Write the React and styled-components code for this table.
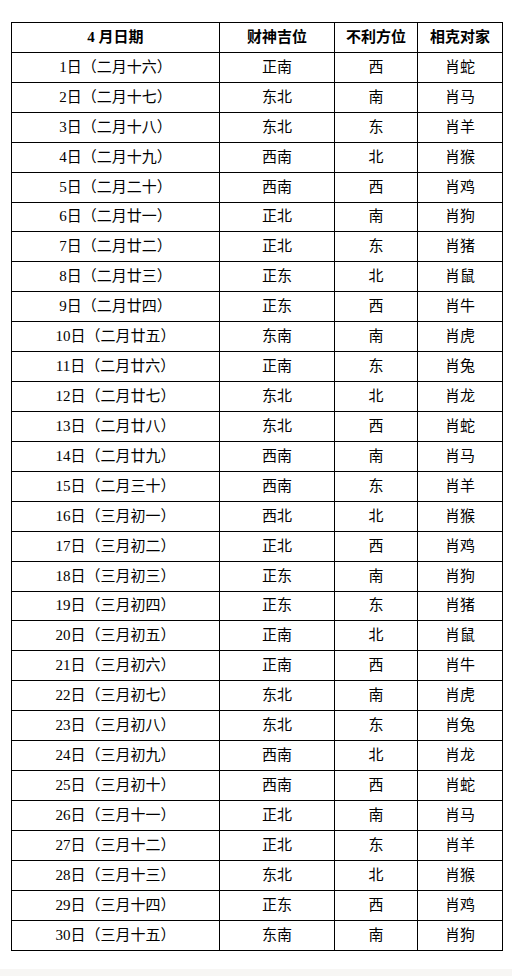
import React from 'react';
import styled, { createGlobalStyle } from 'styled-components';

const GlobalStyle = createGlobalStyle`
  *, *::before, *::after {
    box-sizing: border-box;
  }
  html, body {
    margin: 0;
    padding: 0;
    background: #fff;
  }
  body {
    font-family: "Liberation Serif", "Noto Sans CJK SC", serif;
    color: #000;
  }
`;

const Page = styled.div`
  width: 512px;
  height: 976px;
  display: flex;
  flex-direction: column;
  padding-top: 22px;
  overflow: hidden;
`;

const Table = styled.table`
  margin-left: 11px;
  width: 491px;
  border-collapse: collapse;
  table-layout: fixed;
`;

const Cell = styled.td`
  height: 29.93px;
  padding: 0;
  border: 1px solid #000;
  text-align: center;
  vertical-align: middle;
  font-size: 15px;
  line-height: 1;
  font-weight: ${(props) => (props.$head ? 700 : 400)};
`;

const Footer = styled.div`
  margin-top: auto;
  height: 7px;
  flex-shrink: 0;
  background: #f7f6f4;
`;

const rows = [
  ['二月十六', '正南', '西', '肖蛇'],
  ['二月十七', '东北', '南', '肖马'],
  ['二月十八', '东北', '东', '肖羊'],
  ['二月十九', '西南', '北', '肖猴'],
  ['二月二十', '西南', '西', '肖鸡'],
  ['二月廿一', '正北', '南', '肖狗'],
  ['二月廿二', '正北', '东', '肖猪'],
  ['二月廿三', '正东', '北', '肖鼠'],
  ['二月廿四', '正东', '西', '肖牛'],
  ['二月廿五', '东南', '南', '肖虎'],
  ['二月廿六', '正南', '东', '肖兔'],
  ['二月廿七', '东北', '北', '肖龙'],
  ['二月廿八', '东北', '西', '肖蛇'],
  ['二月廿九', '西南', '南', '肖马'],
  ['二月三十', '西南', '东', '肖羊'],
  ['三月初一', '西北', '北', '肖猴'],
  ['三月初二', '正北', '西', '肖鸡'],
  ['三月初三', '正东', '南', '肖狗'],
  ['三月初四', '正东', '东', '肖猪'],
  ['三月初五', '正南', '北', '肖鼠'],
  ['三月初六', '正南', '西', '肖牛'],
  ['三月初七', '东北', '南', '肖虎'],
  ['三月初八', '东北', '东', '肖兔'],
  ['三月初九', '西南', '北', '肖龙'],
  ['三月初十', '西南', '西', '肖蛇'],
  ['三月十一', '正北', '南', '肖马'],
  ['三月十二', '正北', '东', '肖羊'],
  ['三月十三', '东北', '北', '肖猴'],
  ['三月十四', '正东', '西', '肖鸡'],
  ['三月十五', '东南', '南', '肖狗'],
];

const App = () => (
  <Page>
    <GlobalStyle />
    <Table>
      <colgroup>
        <col style={{ width: '208px' }} />
        <col style={{ width: '115px' }} />
        <col style={{ width: '83px' }} />
        <col style={{ width: '85px' }} />
      </colgroup>
      <thead>
        <tr>
          <Cell as="th" $head>4 月日期</Cell>
          <Cell as="th" $head>财神吉位</Cell>
          <Cell as="th" $head>不利方位</Cell>
          <Cell as="th" $head>相克对家</Cell>
        </tr>
      </thead>
      <tbody>
        {rows.map(([lunar, lucky, bad, clash], i) => (
          <tr key={lunar}>
            <Cell>{`${i + 1}日（${lunar}）`}</Cell>
            <Cell>{lucky}</Cell>
            <Cell>{bad}</Cell>
            <Cell>{clash}</Cell>
          </tr>
        ))}
      </tbody>
    </Table>
    <Footer />
  </Page>
);

export default App;
